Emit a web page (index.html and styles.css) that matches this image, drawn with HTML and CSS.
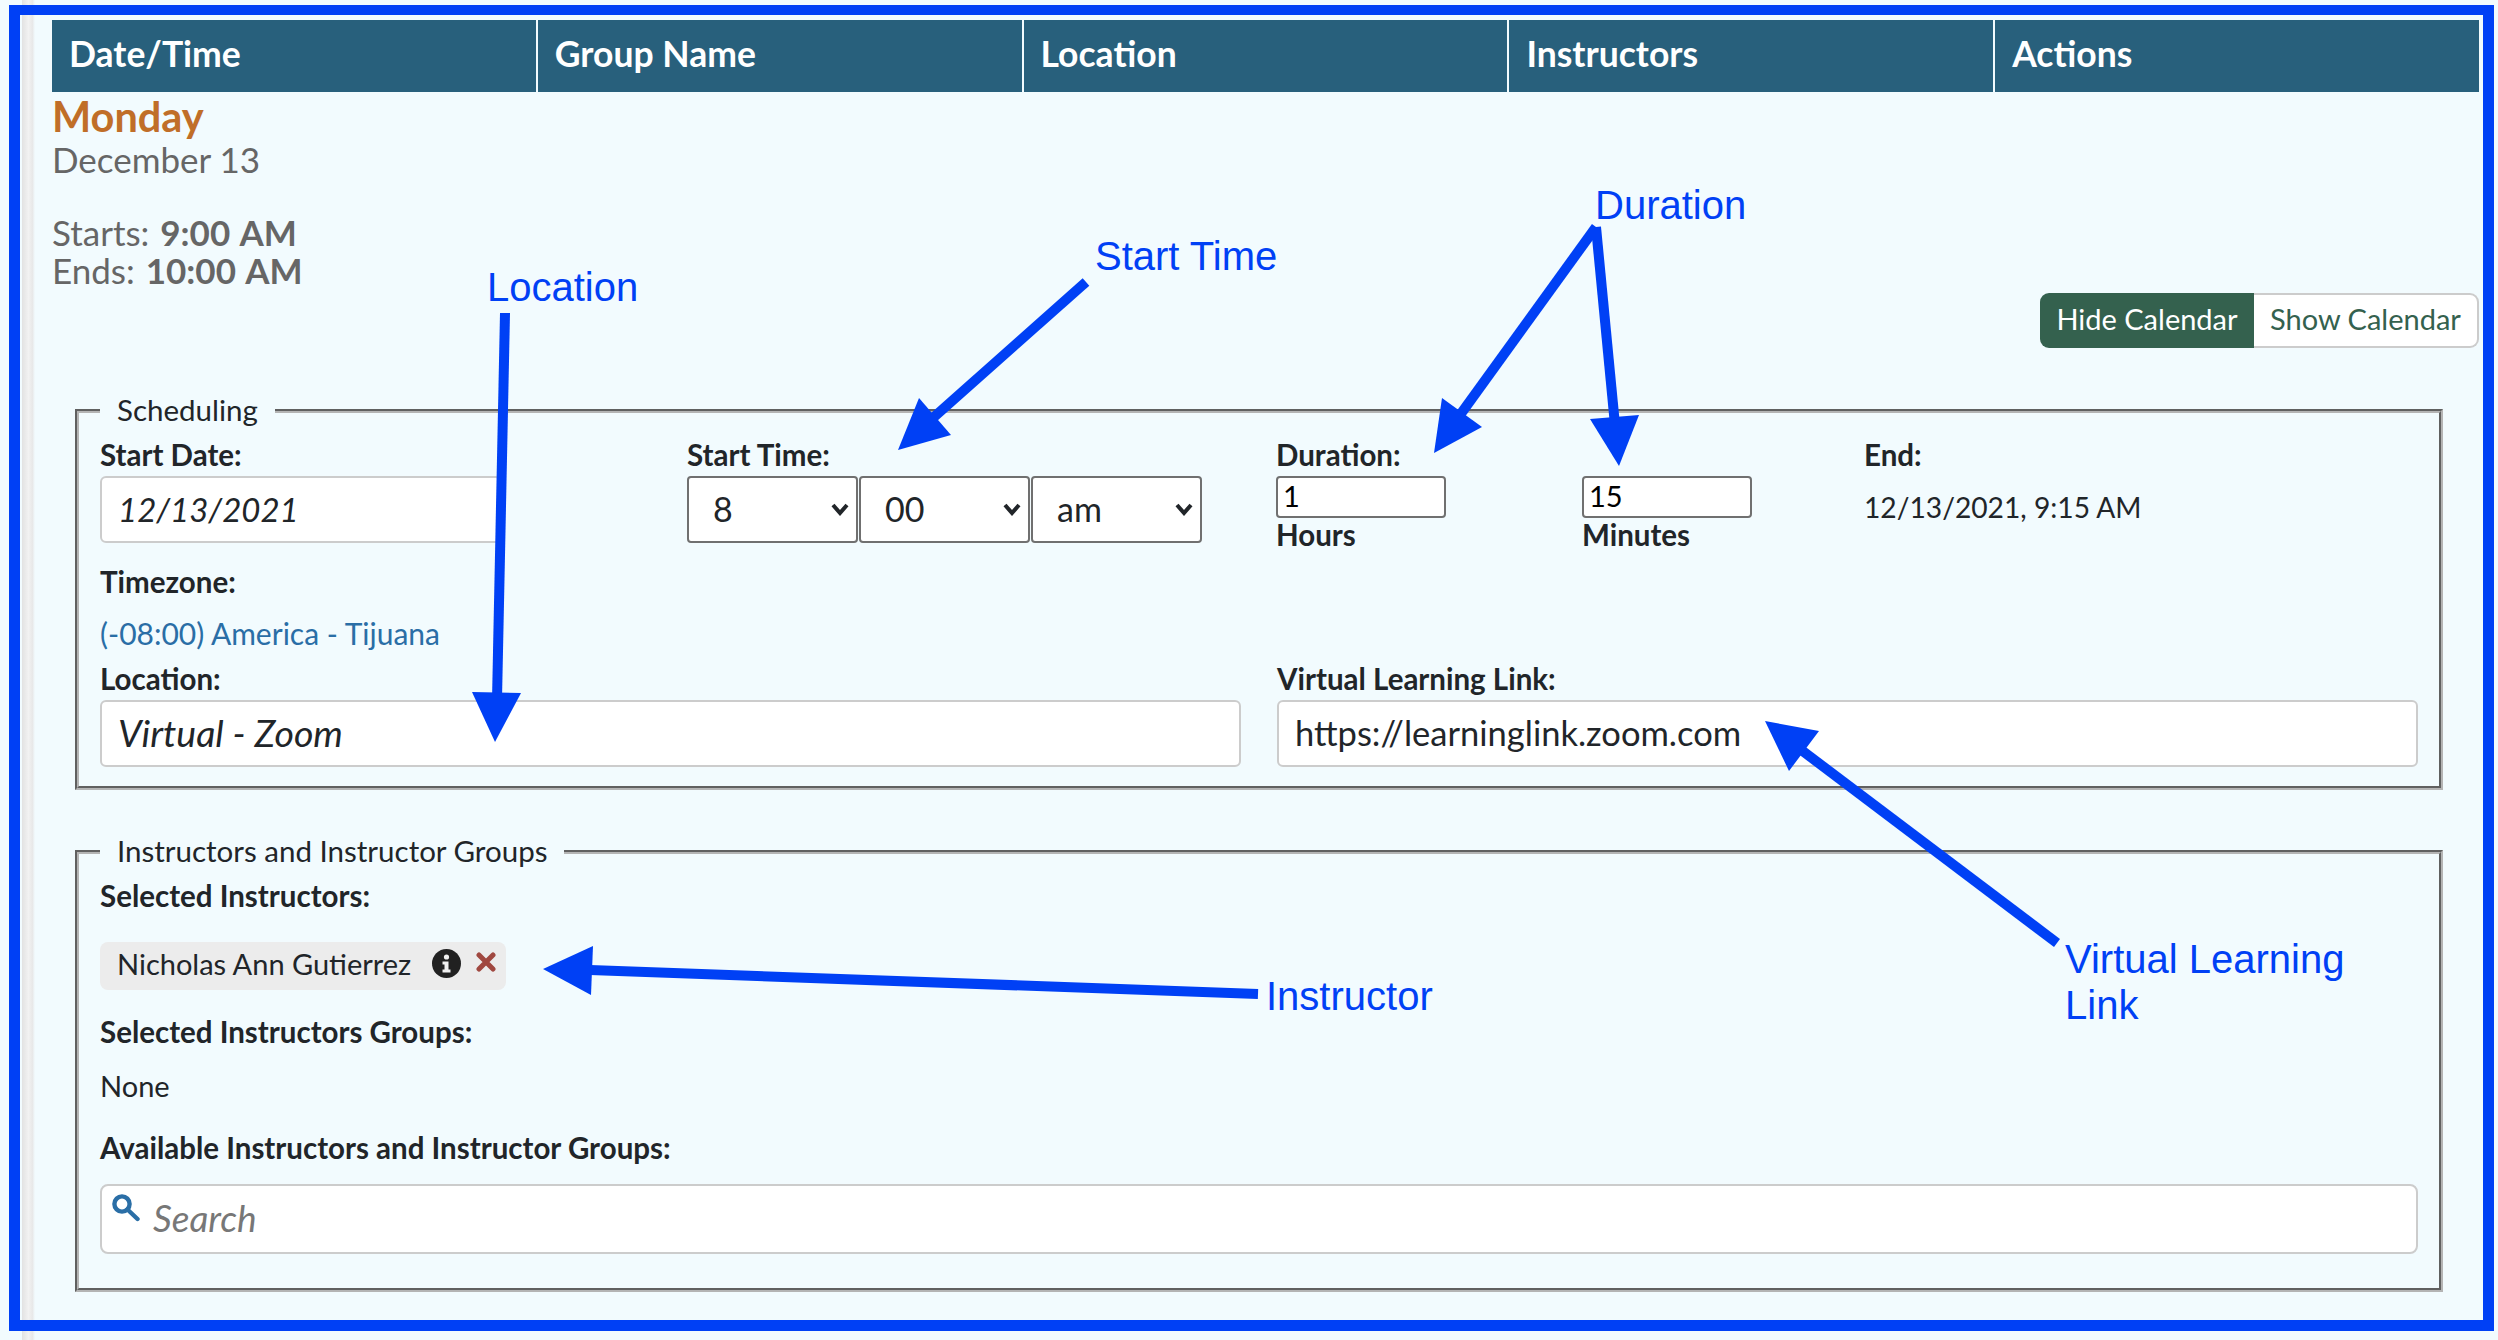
FILE: index.html
```html
<!DOCTYPE html>
<html lang="en">
<head>
  <meta charset="UTF-8" />
  <title>Class Scheduling</title>
  <link rel="stylesheet" href="styles.css">
</head>
<body>
  <div class="side-strip"></div>
  <div class="frame">
    <div class="table-head">
      <div class="th">Date/Time</div>
      <div class="th">Group Name</div>
      <div class="th">Location</div>
      <div class="th">Instructors</div>
      <div class="th">Actions</div>
    </div>

    <div class="summary-row">
      <div class="summary">
        <div class="day">Monday</div>
        <div class="date">December 13</div>
        <div class="times">Starts: <strong>9:00 AM</strong><br>Ends: <strong>10:00 AM</strong></div>
      </div>
      <div class="toggle">
        <button class="toggle-btn active" type="button">Hide Calendar</button>
        <button class="toggle-btn" type="button">Show Calendar</button>
      </div>
    </div>

    <fieldset class="box">
      <legend>Scheduling</legend>
      <div class="row-time">
        <div class="col-date">
          <label>Start Date:</label>
          <input class="field slanted" type="text" value="12/13/2021" />
        </div>
        <div class="col-start">
          <label>Start Time:</label>
          <div class="selects">
            <select class="pick"><option>8</option></select>
            <select class="pick"><option>00</option></select>
            <select class="pick"><option>am</option></select>
          </div>
        </div>
        <div class="col-hours">
          <label>Duration:</label>
          <input class="small" type="text" value="1" />
          <label>Hours</label>
        </div>
        <div class="col-mins">
          <label>&nbsp;</label>
          <input class="small" type="text" value="15" />
          <label>Minutes</label>
        </div>
        <div class="col-end">
          <label>End:</label>
          <div class="end-value">12/13/2021, 9:15 AM</div>
        </div>
      </div>
      <label class="tz-label">Timezone:</label>
      <a class="tz-link" href="#">(-08:00) America - Tijuana</a>
      <div class="row-links">
        <div class="col-half">
          <label>Location:</label>
          <input class="field slanted" type="text" value="Virtual - Zoom" />
        </div>
        <div class="col-half">
          <label>Virtual Learning Link:</label>
          <input class="field" type="text" value="https://learninglink.zoom.com" />
        </div>
      </div>
    </fieldset>

    <fieldset class="box box-instructors">
      <legend>Instructors and Instructor Groups</legend>
      <label class="selected-label">Selected Instructors:</label>
      <div class="chip">
        <span class="chip-name">Nicholas Ann Gutierrez</span>
        <svg class="chip-info" viewBox="0 0 29 29">
          <circle cx="14.5" cy="14.5" r="14.5" fill="#212121"/>
          <circle cx="14.5" cy="8" r="2.6" fill="#f0f0f0"/>
          <path d="M10.5 12.5h6v8h2v3h-8v-3h2v-5h-2z" fill="#f0f0f0"/>
        </svg>
        <svg class="chip-x" viewBox="0 0 20 20">
          <path d="M3 3l14 14M17 3L3 17" stroke="#a04840" stroke-width="5" stroke-linecap="round"/>
        </svg>
      </div>
      <label class="groups-label">Selected Instructors Groups:</label>
      <div class="none">None</div>
      <label class="avail-label">Available Instructors and Instructor Groups:</label>
      <div class="search">
        <svg class="search-icon" viewBox="0 0 28 28">
          <circle cx="10" cy="10" r="7.6" fill="none" stroke="#2a6ea6" stroke-width="4.4"/>
          <path d="M15.5 15.5L25.5 25" stroke="#2a6ea6" stroke-width="4.4" stroke-linecap="round"/>
        </svg>
        <span>Search</span>
      </div>
    </fieldset>
  </div>

  <!-- annotations drawn on top of the screenshot -->
  <svg class="arrows" width="2498" height="1340" viewBox="0 0 2498 1340">
    <g stroke="#0040f5" stroke-width="10" fill="none">
      <path d="M505 313L497 700"/>
      <path d="M1086 282L925 425"/>
      <path d="M1596 227L1460 415"/>
      <path d="M1596 227L1615 425"/>
      <path d="M590 970L1258 994"/>
      <path d="M2057 943L1800 749"/>
    </g>
    <g fill="#0040f5">
      <path d="M472 692L521 693L495 742z"/>
      <path d="M919 398L951 435L898 450z"/>
      <path d="M1442 398L1482 427L1434 453z"/>
      <path d="M1590 419L1639 415L1619 466z"/>
      <path d="M593 946L591 995L543 969z"/>
      <path d="M1765 721L1819 731L1789 771z"/>
    </g>
  </svg>
  <div class="note note-location">Location</div>
  <div class="note note-start">Start Time</div>
  <div class="note note-duration">Duration</div>
  <div class="note note-instructor">Instructor</div>
  <div class="note note-virtual">Virtual Learning<br>Link</div>
</body>
</html>
```

FILE: styles.css
```css
html, body {
  margin: 0;
  height: 1340px;
  overflow: hidden;
}
body {
  position: relative;
  box-sizing: border-box;
  padding: 5px 0 0 9px;
  background: #f2fbfe;
  color: #212529;
  font-family: "Lato", "Open Sans", sans-serif;
}
.side-strip {
  position: absolute;
  left: 22px;
  top: 0;
  bottom: 0;
  width: 13px;
  background: linear-gradient(to right, #e2e2e2, #f2f2f2 50%, #e8e8e8 80%, #f2fbfe);
}
.frame {
  position: relative;
  width: 2485px;
  height: 1326px;
  box-sizing: border-box;
  border: 11px solid #0040f5;
  border-top-width: 10px;
  padding: 5px 0 0 32px;
}
.table-head {
  display: flex;
  width: 2427px;
  height: 72px;
  background: #28607c;
}
.th {
  flex: 1;
  border-left: 2px solid #f2fbfe;
  padding-left: 17px;
  color: #fff;
  font-size: 35.5px;
  font-weight: 700;
  line-height: 68px;
}
.th:first-child {
  border-left: 0;
}
.summary-row {
  display: flex;
  justify-content: space-between;
  width: 2427px;
  height: 302px;
}
.summary {
  color: #666;
  font-size: 35px;
  line-height: 38px;
}
.day {
  color: #c06e28;
  font-size: 41.5px;
  font-weight: 700;
  line-height: 48px;
}
.date {
  line-height: 39px;
}
.times {
  margin-top: 34px;
  word-spacing: 2px;
}
.toggle {
  display: flex;
  margin-top: 201px;
  height: 55px;
}
.toggle-btn {
  width: 225px;
  box-sizing: border-box;
  padding: 0 0 4px;
  font-family: inherit;
  font-size: 29px;
  border: 2px solid #ccc;
  border-left: 0;
  border-radius: 0 9px 9px 0;
  background: #fff;
  color: #34614e;
}
.toggle-btn.active {
  width: 214px;
  border: 0;
  border-radius: 9px 0 0 9px;
  background: #34614e;
  color: #fff;
}
label {
  display: block;
  font-size: 29.5px;
  font-weight: 700;
  line-height: 34px;
}
.box {
  width: 2367px;
  box-sizing: border-box;
  margin: 0 0 0 23px;
  border: 4px groove #b4b4b4;
  padding: 0 21px 19px;
}
.box-instructors {
  margin-top: 45px;
  padding-bottom: 34px;
}
legend {
  font-size: 29.5px;
  line-height: 31px;
  padding: 0 17px 3px;
}
.row-time {
  display: flex;
  margin-top: 10px;
}
.col-date { width: 587px; }
.col-start { width: 589px; }
.col-hours { width: 306px; }
.col-mins { width: 282px; }
.field {
  display: block;
  box-sizing: border-box;
  width: 100%;
  height: 67px;
  margin-top: 4px;
  padding: 0 16px 2px;
  border: 2px solid #ccc;
  border-radius: 6px;
  background: #fff;
  color: #212529;
  font-family: inherit;
  font-size: 34.5px;
}
.field.slanted {
  font-size: 37.5px;
  font-style: italic;
}
.col-date .field {
  width: 402px;
  font-size: 33px;
}
.selects {
  display: flex;
  gap: 1px;
  margin-top: 4px;
}
.pick {
  appearance: none;
  width: 171px;
  height: 67px;
  box-sizing: border-box;
  padding: 0 24px 2px;
  border: 2px solid #707070;
  border-radius: 4px;
  background: #fff url("data:image/svg+xml,%3Csvg xmlns='http://www.w3.org/2000/svg' width='18' height='13'%3E%3Cpath d='M2 2l7 8 7-8' fill='none' stroke='%23212529' stroke-width='4'/%3E%3C/svg%3E") no-repeat right 7px center;
  color: #212529;
  font-family: inherit;
  font-size: 34px;
}
.small {
  display: block;
  box-sizing: border-box;
  width: 170px;
  height: 42px;
  margin-top: 4px;
  padding: 0 5px 3px;
  border: 2px solid #707070;
  border-radius: 4px;
  background: #fff;
  color: #000;
  font-family: inherit;
  font-size: 29px;
}
.end-value {
  margin-top: 18px;
  font-size: 28.2px;
  line-height: 34px;
}
.tz-label {
  margin-top: 13px;
}
.tz-link {
  display: block;
  margin-top: 17px;
  color: #2a6ea6;
  font-size: 30px;
  line-height: 34px;
  text-decoration: none;
}
.row-links {
  display: flex;
  gap: 36px;
  margin-top: 12px;
}
.col-half {
  width: 1141px;
}
.selected-label {
  margin-top: 10px;
}
.chip {
  display: flex;
  align-items: center;
  width: 406px;
  height: 48px;
  box-sizing: border-box;
  margin-top: 29px;
  padding: 0 10px 0 17px;
  border-radius: 8px;
  background: #ececec;
  font-size: 29px;
}
.chip-name {
  flex: 1;
  margin-top: -5px;
}
.chip-info {
  width: 29px;
  height: 29px;
  margin-top: -6px;
}
.chip-x {
  width: 20px;
  height: 20px;
  margin: -8px 0 0 15px;
}
.groups-label {
  margin-top: 25px;
}
.none {
  margin-top: 20px;
  font-size: 29px;
  line-height: 34px;
}
.avail-label {
  margin-top: 28px;
}
.search {
  display: flex;
  height: 70px;
  box-sizing: border-box;
  width: 2318px;
  margin-top: 19px;
  padding-left: 10px;
  border: 2px solid #ccc;
  border-radius: 8px;
  background: #fff;
  color: #777;
  font-size: 37px;
  font-style: italic;
}
.search-icon {
  width: 28px;
  height: 28px;
  margin-top: 8px;
}
.search span {
  margin-left: 13px;
  line-height: 63px;
}
.arrows {
  position: absolute;
  left: 0;
  top: 0;
}
.note {
  position: absolute;
  color: #0040f5;
  font-family: "Liberation Sans", Arial, sans-serif;
  font-size: 40px;
  line-height: 46px;
}
.note-location { left: 487px; top: 264px; }
.note-start { left: 1095px; top: 233px; }
.note-duration { left: 1595px; top: 182px; }
.note-instructor { left: 1266px; top: 973px; }
.note-virtual { left: 2065px; top: 936px; }
```
